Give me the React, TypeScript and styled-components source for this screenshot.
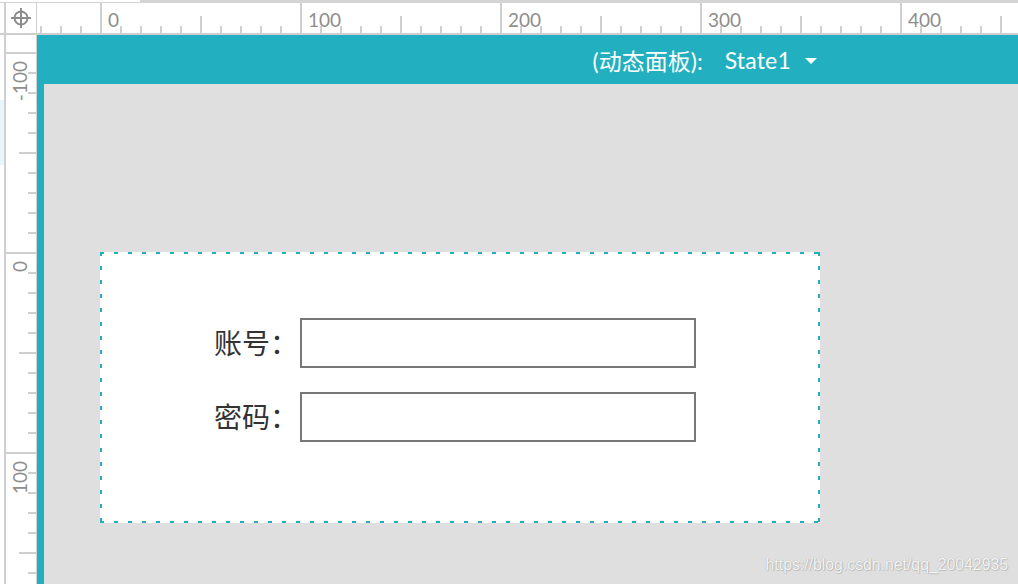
import React from "react";
import styled, { createGlobalStyle } from "styled-components";

const TEAL = "#22b0c0";
const RULE = "#cfcfcf";

const GlobalStyle = createGlobalStyle`
  html, body {
    margin: 0;
    padding: 0;
    overflow: hidden;
    background: #fff;
    font-family: Lato, "Noto Sans CJK SC", sans-serif;
  }
`;

const Frame = styled.div`
  width: 1018px;
  height: 584px;
  display: grid;
  grid-template-columns: 37px 1fr;
  grid-template-rows: 35px 1fr;
  position: relative;
  overflow: hidden;
`;

const RulerSvg = styled.svg`
  display: block;
  background: #fff;
`;

const Stage = styled.div`
  background: ${TEAL};
  padding-left: 7px;
  display: flex;
  flex-direction: column;
  min-height: 0;
`;

const PanelHeader = styled.div`
  height: 49px;
  display: flex;
  align-items: center;
  justify-content: flex-end;
  padding-right: 201px;
  color: #fff;
  font-family: Lato, "Noto Sans CJK SC", sans-serif;
  font-size: 23px;
  gap: 14px;
`;

const PanelName = styled.span`
  margin-right: 8px;
`;

const StateName = styled.span`
  letter-spacing: 0.2px;
`;

const Caret = styled.span`
  width: 0;
  height: 0;
  border-left: 6px solid transparent;
  border-right: 6px solid transparent;
  border-top: 6px solid #fff;
  margin-top: 2px;
`;

const Canvas = styled.div`
  flex: 1;
  background: #dfdfdf;
  padding: 168px 0 0 56px;
`;

const dash = (dir: string) =>
  `repeating-linear-gradient(${dir}, ${TEAL} 0 4px, transparent 4px 14px)`;

const PanelBox = styled.div`
  width: 720px;
  height: 271px;
  box-sizing: border-box;
  background-color: #fff;
  background-image: ${dash("90deg")}, ${dash("90deg")}, ${dash("180deg")}, ${dash("180deg")};
  background-size: 100% 2px, 100% 2px, 2px 100%, 2px 100%;
  background-position: 0 0, 0 100%, 0 0, 100% 0;
  background-repeat: no-repeat;
  padding-top: 66px;
`;

const Form = styled.div`
  display: grid;
  grid-template-columns: 198px 396px;
  column-gap: 2px;
  row-gap: 24px;
  align-items: center;
`;

const Label = styled.label`
  justify-self: end;
  font-family: "Noto Sans CJK SC", sans-serif;
  font-size: 28px;
  color: #333;
  line-height: 1;
  margin-top: -3px;
`;

const Field = styled.input`
  box-sizing: border-box;
  width: 396px;
  height: 50px;
  border: 2px solid #777;
  background: #fff;
  outline: none;
  margin: 0;
`;

const Watermark = styled.div`
  position: absolute;
  right: 10px;
  bottom: 10px;
  font-family: "Liberation Sans", Arial, sans-serif;
  font-size: 15.8px;
  color: rgba(255, 255, 255, 0.9);
  text-shadow: 0 0 1px rgba(0, 0, 0, 0.3), 1px 1px 1px rgba(0, 0, 0, 0.12);
`;

const Corner = () => (
  <RulerSvg width={37} height={35}>
    <rect x={0} y={0} width={37} height={3} fill="#d4d4d4" />
    <rect x={0} y={0} width={37} height={2} fill="#fff" />
    <rect x={4} y={2} width={2} height={33} fill={RULE} />
    <rect x={0} y={33} width={37} height={2} fill={RULE} />
    <rect x={36} y={2} width={1} height={33} fill={RULE} />
    <g stroke="#8c8c8c" strokeWidth={2} fill="none">
      <circle cx={21} cy={18} r={6.5} />
      <line x1={21} y1={8} x2={21} y2={28} />
      <line x1={11} y1={18} x2={31} y2={18} />
    </g>
  </RulerSvg>
);

const HRuler = () => {
  const w = 981;
  const ticks: JSX.Element[] = [];
  for (let x = 4; x < w; x += 20) {
    const page = x + 37;
    const major = (page - 101) % 200 === 0;
    const mid = !major && (page - 101) % 100 === 0;
    const top = major ? 3 : mid ? 16 : 26;
    ticks.push(<rect key={x} x={x - 1} y={top} width={2} height={33 - top} fill={RULE} />);
  }
  const labels = [0, 100, 200, 300, 400].map((v, i) => (
    <text key={v} x={64 + i * 200 + 7} y={27} fontSize={19} fill="#8e8e8e" fontFamily="Lato, sans-serif">
      {v}
    </text>
  ));
  return (
    <RulerSvg width={w} height={35}>
      <rect x={0} y={0} width={w} height={3} fill="#d4d4d4" />
      <rect x={0} y={0} width={103} height={2} fill="#fff" />
      <rect x={0} y={33} width={w} height={2} fill={RULE} />
      {ticks}
      {labels}
    </RulerSvg>
  );
};

const VRuler = () => {
  const h = 549;
  const ticks: JSX.Element[] = [];
  for (let y = 18; y < h; y += 20) {
    const page = y + 35;
    const major = (page - 53) % 200 === 0;
    const mid = !major && (page - 53) % 100 === 0;
    const left = major ? 6 : mid ? 19 : 28;
    ticks.push(<rect key={y} x={left} y={y - 1} width={36 - left} height={2} fill={RULE} />);
  }
  const labels = [-100, 0, 100].map((v, i) => {
    const y = 18 + i * 200 + 8;
    return (
      <text
        key={v}
        x={27}
        y={y}
        fontSize={19}
        fill="#8e8e8e"
        fontFamily="Lato, sans-serif"
        textAnchor="end"
        transform={`rotate(-90 27 ${y})`}
      >
        {v}
      </text>
    );
  });
  return (
    <RulerSvg width={37} height={h}>
      <rect x={0} y={65} width={4} height={65} fill="#e6f7f9" />
      <rect x={4} y={0} width={2} height={h} fill={RULE} />
      <rect x={36} y={0} width={1} height={h} fill={RULE} />
      {ticks}
      {labels}
    </RulerSvg>
  );
};

export default function App() {
  return (
    <>
      <GlobalStyle />
      <Frame>
        <Corner />
        <HRuler />
        <VRuler />
        <Stage>
          <PanelHeader>
            <PanelName>(动态面板):</PanelName>
            <StateName>State1</StateName>
            <Caret />
          </PanelHeader>
          <Canvas>
            <PanelBox>
              <Form>
                <Label>账号：</Label>
                <Field type="text" />
                <Label>密码：</Label>
                <Field type="password" />
              </Form>
            </PanelBox>
          </Canvas>
        </Stage>
        <Watermark>https://blog.csdn.net/qq_20042935</Watermark>
      </Frame>
    </>
  );
}
